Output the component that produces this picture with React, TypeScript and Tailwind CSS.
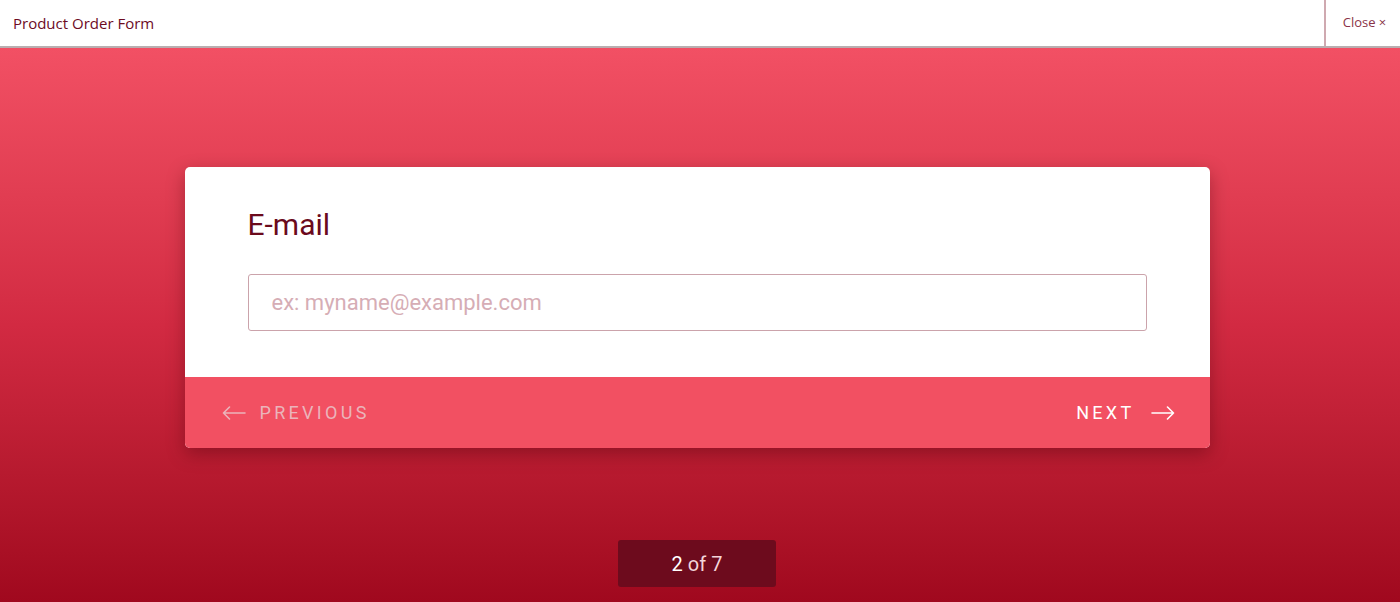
function LongArrow({ dir }: { dir: "left" | "right" }) {
  return (
    <svg width="24" height="14" viewBox="0 0 24 14" fill="none" stroke="currentColor" strokeWidth="1.6" strokeLinecap="round" strokeLinejoin="round">
      {dir === "left" ? (
        <path d="M23 7H1.5M7.5 1L1.5 7l6 6" />
      ) : (
        <path d="M1 7h21.5M16.5 1l6 6-6 6" />
      )}
    </svg>
  )
}

export default function App() {
  return (
    <div className="flex h-[602px] w-full flex-col overflow-hidden bg-white">
      {/* Top bar */}
      <header className="flex h-[48px] shrink-0 items-stretch border-b-2 border-[#b9aeb0] bg-white">
        <div className="flex flex-1 items-center pl-[13px] pt-[1px] font-['Open_Sans',sans-serif] text-[15px] text-[#6d0b1f]">
          Product Order Form
        </div>
        <button className="flex w-[76px] items-center justify-center border-l-2 border-[#cfa9b0] pl-[3px] font-['Open_Sans',sans-serif] text-[13px] text-[#8a3348]">
          Close ×
        </button>
      </header>

      {/* Form area */}
      <main className="flex flex-1 flex-col items-center bg-gradient-to-b from-[#f25064] via-[#d22a42] to-[#a0081e] pr-[6px] pt-[119px] font-['Roboto',sans-serif]">
        <div className="w-[1025px] overflow-hidden rounded-[5px] bg-white shadow-[0_6px_18px_rgba(60,0,10,0.35)]">
          <div className="px-[63px] pb-[46px] pt-[40px]">
            <h2 className="text-[30px] leading-[36px] text-[#6b0a1c]">E-mail</h2>
            <input
              type="text"
              placeholder="ex: myname@example.com"
              className="mt-[31px] h-[57px] w-full rounded-[3px] border border-[#cba3ab] px-[23px] text-[22px] text-[#6b0a1c] outline-none placeholder:text-[#d6adb5]"
            />
          </div>
          <div className="flex h-[71px] items-center justify-between bg-[#f25062] pl-[37px] pr-[35px]">
            <button className="flex items-center gap-[14px] text-[18px] tracking-[3.3px] text-[#ebb4bb]">
              <LongArrow dir="left" />
              PREVIOUS
            </button>
            <button className="flex items-center gap-[16px] text-[18px] tracking-[3.3px] text-white">
              NEXT
              <LongArrow dir="right" />
            </button>
          </div>
        </div>

        <div className="mt-[92px] flex h-[47px] w-[158px] items-center justify-center rounded-[3px] bg-[#6d0b1d] text-[20px] text-white">
          2 <span className="ml-[5px] text-[#f3d5da]">of 7</span>
        </div>
      </main>
    </div>
  )
}
